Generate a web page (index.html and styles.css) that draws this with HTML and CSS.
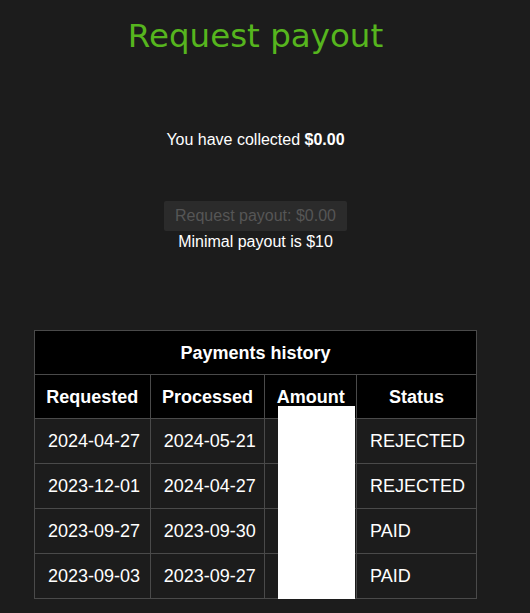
FILE: index.html
```html
<!DOCTYPE html>
<html>
<head>
<meta charset="utf-8">
<link rel="stylesheet" href="styles.css">
</head>
<body>
<div class="page">
  <h1 class="title">Request payout</h1>
  <p class="collected">You have collected <b>$0.00</b></p>
  <button class="payout-btn" disabled>Request payout: $0.00</button>
  <p class="minimal">Minimal payout is $10</p>
  <div class="history">
    <table class="history-table">
      <colgroup>
        <col class="c1"><col class="c2"><col class="c3"><col class="c4">
      </colgroup>
      <thead>
        <tr><th colspan="4">Payments history</th></tr>
        <tr><th>Requested</th><th>Processed</th><th>Amount</th><th>Status</th></tr>
      </thead>
      <tbody>
        <tr><td>2024-04-27</td><td>2024-05-21</td><td></td><td>REJECTED</td></tr>
        <tr><td>2023-12-01</td><td>2024-04-27</td><td></td><td>REJECTED</td></tr>
        <tr><td>2023-09-27</td><td>2023-09-30</td><td></td><td>PAID</td></tr>
        <tr><td>2023-09-03</td><td>2023-09-27</td><td></td><td>PAID</td></tr>
      </tbody>
    </table>
    <div class="redact"></div>
  </div>
</div>
</body>
</html>
```
FILE: styles.css
```css
html, body {
  margin: 0;
  padding: 0;
  background: #1c1c1c;
}
body {
  font-family: "Liberation Sans", Arial, sans-serif;
  color: #ffffff;
  height: 613px;
  overflow: hidden;
}
.page {
  width: 511px;
  display: flex;
  flex-direction: column;
  align-items: center;
}
.title {
  font-family: "DejaVu Sans", sans-serif;
  font-weight: normal;
  font-size: 32.5px;
  color: #56b51e;
  margin: 16px 0 0 0;
  line-height: 41px;
}
.collected {
  font-size: 16px;
  margin: 73px 0 0 0;
  line-height: 20px;
}
.payout-btn {
  margin-top: 51px;
  width: 183px;
  height: 30px;
  background: #2b2b2b;
  color: #565656;
  border: none;
  border-radius: 2px;
  font-family: "Liberation Sans", Arial, sans-serif;
  font-size: 16px;
  padding: 0;
}
.minimal {
  font-size: 16px;
  margin: 1px 0 0 0;
  line-height: 20px;
}
.history {
  position: relative;
  margin-top: 78px;
}
.history-table {
  border-collapse: collapse;
  width: 443px;
  font-size: 18px;
}
.c1 { width: 116px; }
.c2 { width: 115px; }
.c3 { width: 92px; }
.c4 { width: 120px; }
.history-table th {
  background: #000000;
  border: 1px solid #4a4a4a;
  font-weight: bold;
  text-align: center;
  height: 41px;
  padding: 2px 0 0 0;
}
.history-table td {
  border: 1px solid #4a4a4a;
  text-align: left;
  padding: 0 0 0 13px;
  height: 44px;
  background: #1c1c1c;
}
.redact {
  position: absolute;
  left: 244px;
  top: 76px;
  width: 77px;
  height: 193px;
  background: #ffffff;
}
```
